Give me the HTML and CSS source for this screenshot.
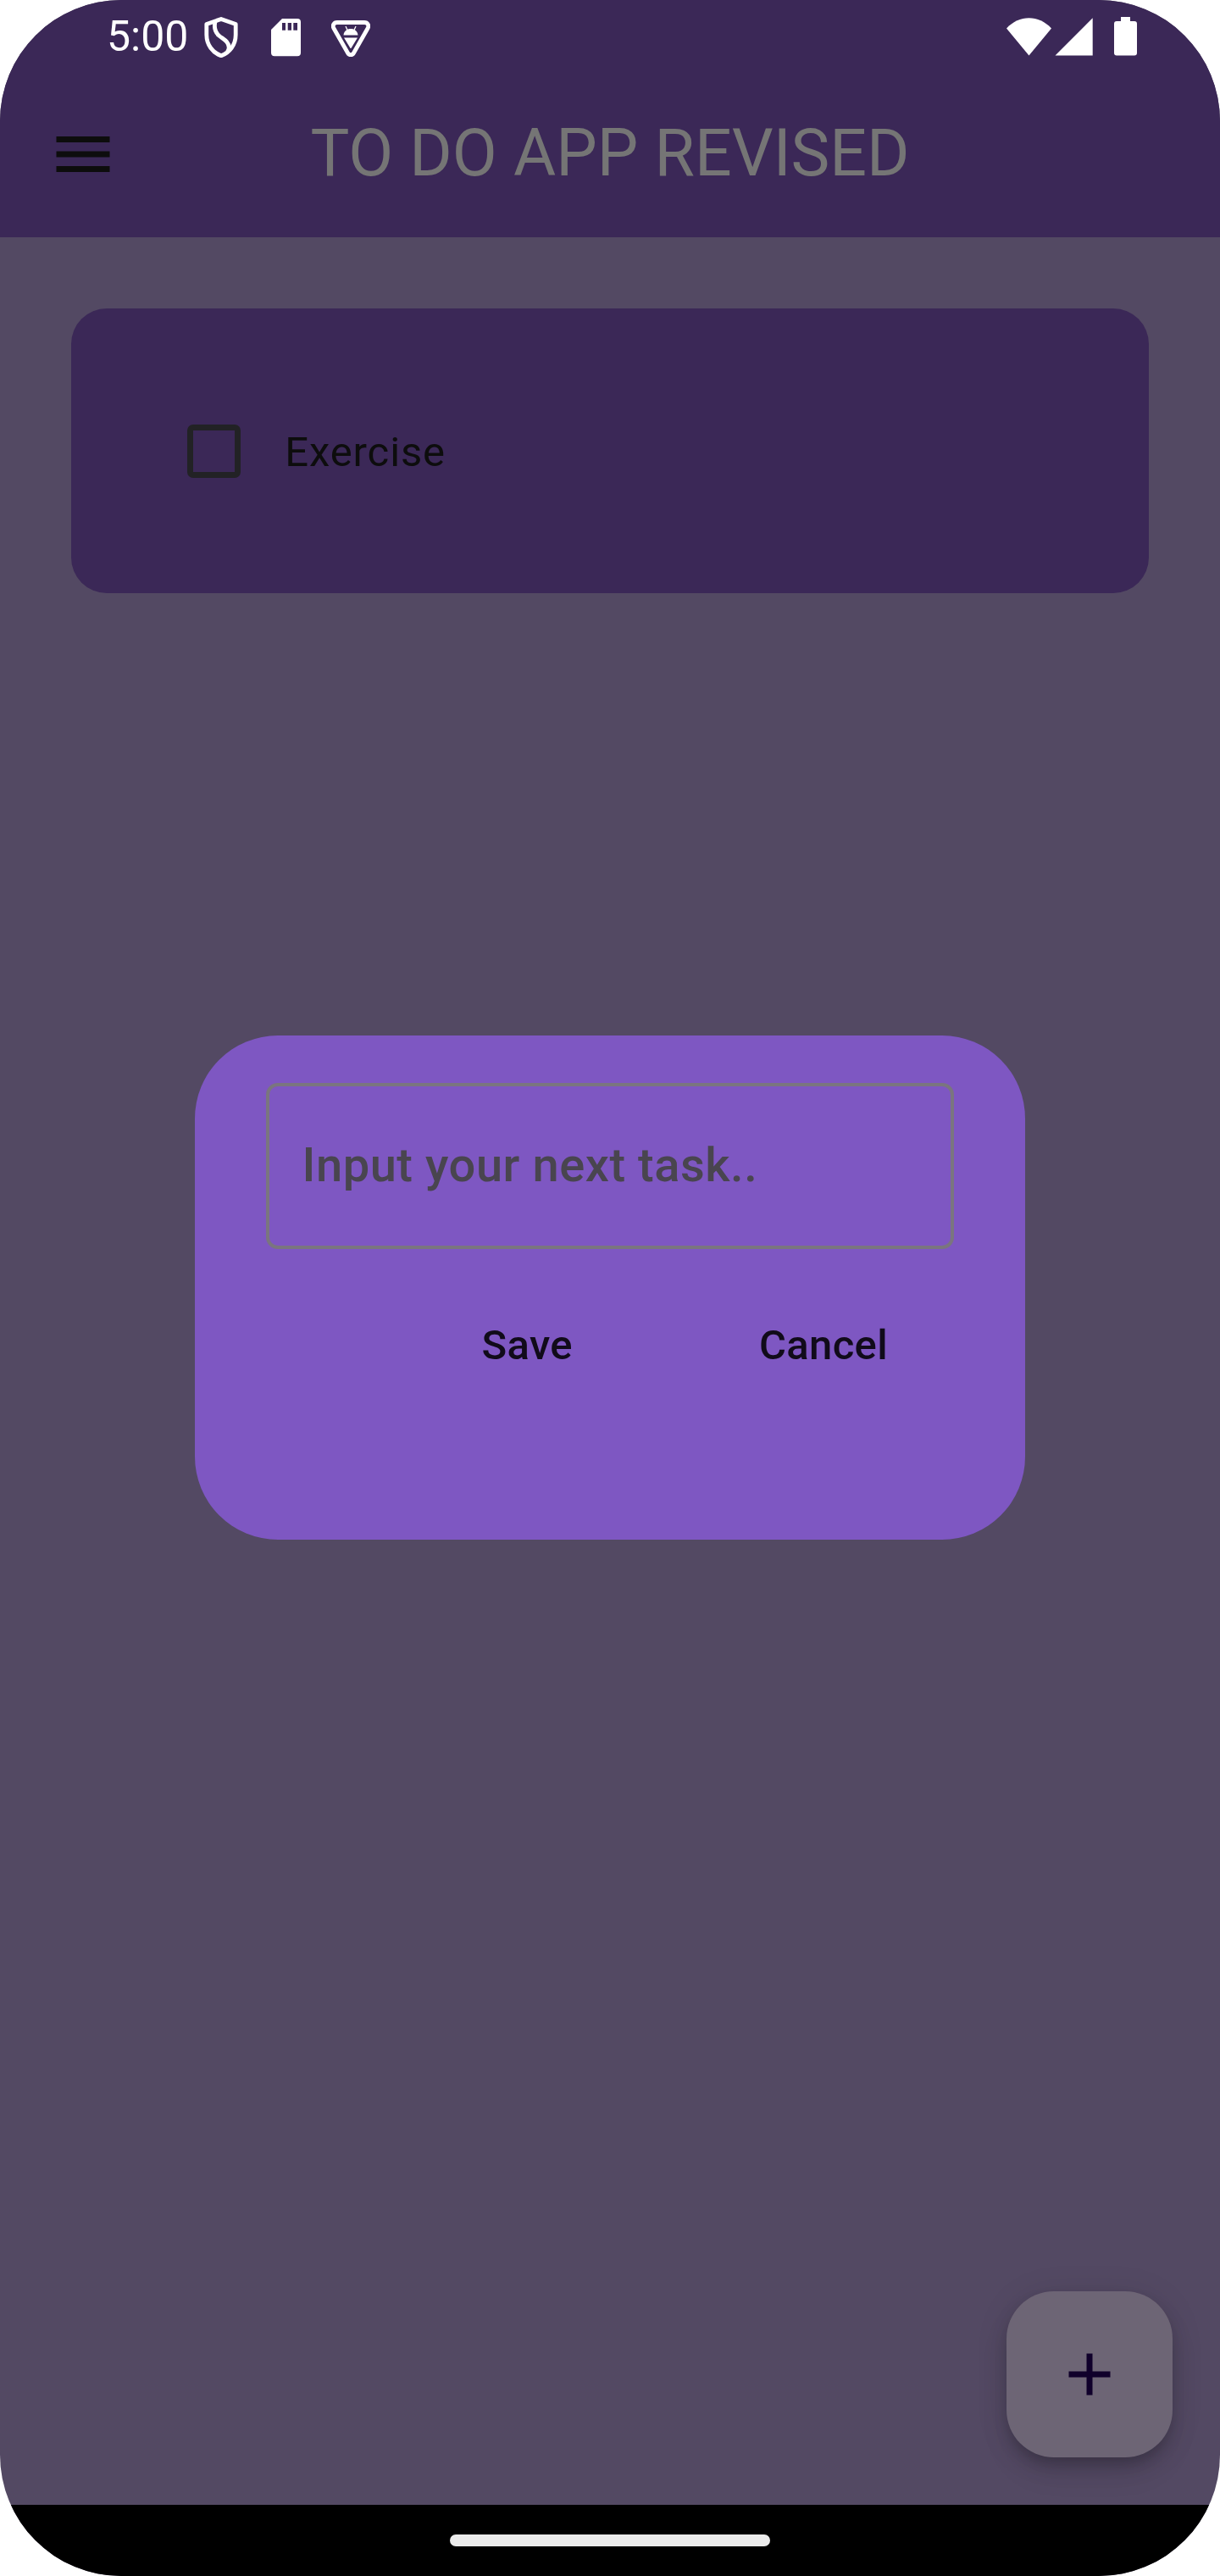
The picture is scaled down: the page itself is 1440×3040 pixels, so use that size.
FILE: index.html
```html
<!DOCTYPE html>
<html lang="en">
<head>
<meta charset="utf-8">
<title>To Do App Revised</title>
<link rel="stylesheet" href="styles.css">
</head>
<body>
<div class="screen">
  <header class="top">
    <div class="status">
      <div class="status-left">
        <span class="clock">5:00</span>
        <svg class="i-shield" viewBox="0 0 40 48" width="40" height="48" fill="none" stroke="#fff" stroke-width="4.8" stroke-linejoin="round">
          <path d="M20 2.4 L37.2 8.6 V21 C37.2 33 30 42 20 45.8 C10 42 2.8 33 2.8 21 V8.6 Z"/>
          <path d="M13 5.5 C11.5 12 12.5 18 18 22.500 C23 26.500 29 29 29.200 36 C29.200 38 28.500 39.500 27.500 41"/>
        </svg>
        <svg class="i-sd" viewBox="0 0 35 44.500" width="35" height="44.500" fill="#fff">
          <path fill-rule="evenodd" d="M13 0 H31 Q35 0 35 4 V40.300 Q35 44.300 31 44.300 H4 Q0 44.300 0 40.300 V13 Z M13 5 V13.700 H17 V5 Z M19.700 5 V13.700 H24 V5 Z M26.300 5 V13.700 H31 V5 Z"/>
        </svg>
        <svg class="i-debug" viewBox="0 0 46 43" width="46" height="43">
          <path d="M7 2.500 H39 C43 2.500 45 6 43 9.500 L26.500 38.500 C25 41.300 21 41.300 19.500 38.500 L3 9.500 C1 6 3 2.500 7 2.500 Z" fill="none" stroke="#fff" stroke-width="4.800"/>
          <path d="M14.500 17.500 C15 12.500 18.500 10 23 10 C27.500 10 31 12.500 31.500 17.500 Z M15 20.500 H31 L23.700 32.500 Q23 33.500 22.300 32.500 Z" fill="#fff"/>
          <path d="M19 11.500 L17 7 M27 11.500 L29 7" stroke="#fff" stroke-width="1.300"/>
        </svg>
      </div>
      <div class="status-right">
        <svg viewBox="0 0 53 45" width="53" height="45" fill="#fff"><path d="M0 12.500 C15 -3.800 38 -3.800 53 12.500 L26.500 44.500 Z"/></svg>
        <svg class="i-signal" viewBox="0 0 45 45" width="45" height="45" fill="#fff"><path d="M0.500 44.500 H44.700 V0.300 Z"/></svg>
        <svg class="i-battery" viewBox="0 0 27 46" width="27" height="46" fill="#fff"><path d="M8 0 H19 V5 H24 Q27 5 27 8 V42.600 Q27 45.600 24 45.600 H3 Q0 45.600 0 42.600 V8 Q0 5 3 5 H8 Z"/></svg>
      </div>
    </div>
    <div class="appbar">
      <svg class="menu" viewBox="0 0 24 24" width="84" height="84" fill="#0d0d0d"><path d="M3 18h18v-2H3v2zm0-5h18v-2H3v2zm0-7v2h18V6H3z"/></svg>
      <h1 class="title">TO DO APP REVISED</h1>
    </div>
  </header>
  <main class="content">
    <div class="task">
      <span class="checkbox"></span>
      <span class="task-name">Exercise</span>
    </div>
    <button class="fab" aria-label="Add task">
      <svg viewBox="0 0 24 24" width="84" height="84" fill="#10002b"><path d="M19 13h-6v6h-2v-6H5v-2h6V5h2v6h6v2z"/></svg>
    </button>
  </main>
  <footer class="nav"><span class="pill"></span></footer>
  <section class="dialog" role="dialog">
    <div class="field"><span class="hint">Input your next task..</span></div>
    <div class="actions">
      <button class="action save">Save</button>
      <button class="action cancel">Cancel</button>
    </div>
  </section>
</div>
</body>
</html>
```
FILE: styles.css
```css
* { box-sizing: border-box; }
body { margin: 0; background: #fff; font-family: Roboto, sans-serif; }
svg { display: block; flex: none; }
button { border: 0; padding: 0; background: none; font: inherit; }

.screen {
  position: relative;
  display: flex;
  flex-direction: column;
  width: 1440px;
  height: 3040px;
  border-radius: 143px;
  overflow: hidden;
  background: #534963;
}

.top { height: 280px; background: #3b2857; }
.status {
  display: flex;
  justify-content: space-between;
  height: 84px;
  padding: 20px 98px 0 126px;
}
.status-left, .status-right { display: flex; align-items: flex-start; }
.clock { width: 114.5px; color: #fff; font-size: 50px; line-height: 47px; }
.i-sd { margin: 2px 0 0 39.5px; }
.i-debug { margin: 3.500px 0 0 36px; }
.status-right svg:first-child { margin-top: 1px; }
.i-signal { margin: 1px 0 0 4px; }
.i-battery { margin-left: 25px; }

.appbar {
  display: grid;
  grid-template-columns: 84px 1fr 84px;
  align-items: center;
  height: 196px;
  padding: 0 56px;
}
.title {
  margin: 0;
  padding-bottom: 2px;
  color: #757575;
  font-size: 77px;
  font-weight: 400;
  line-height: 90px;
  text-align: center;
  white-space: nowrap;
}

.content {
  flex: 1;
  display: flex;
  flex-direction: column;
  justify-content: space-between;
  padding: 84px 84px 56px;
}
.task {
  display: flex;
  align-items: center;
  height: 336px;
  padding-left: 136.500px;
  border-radius: 42px;
  background: #3b2857;
}
.checkbox {
  width: 63px;
  height: 63px;
  border: 7px solid #222225;
  border-radius: 7px;
}
.task-name {
  margin-left: 52.800px;
  padding-top: 2px;
  color: #0d0d0d;
  font-size: 49px;
  letter-spacing: .875px;
}
.fab {
  display: flex;
  align-items: center;
  justify-content: center;
  align-self: flex-end;
  width: 196px;
  height: 196px;
  margin-right: -28px;
  border-radius: 56px;
  background: #6d6575;
  box-shadow: 0 11px 18px -4px rgba(0, 0, 0, .22), 0 20px 35px rgba(0, 0, 0, .07), 0 3px 40px rgba(0, 0, 0, .09);
}

.nav {
  display: flex;
  align-items: center;
  justify-content: center;
  height: 84px;
  background: #000;
}
.pill { width: 378px; height: 14px; border-radius: 7px; background: #ebebeb; }

.dialog {
  position: absolute;
  top: 1222px;
  left: 230px;
  width: 980px;
  height: 595px;
  padding: 56px 84px;
  border-radius: 98px;
  background: #7e57c2;
}
.field {
  display: flex;
  align-items: center;
  height: 196px;
  padding-left: 38.500px;
  border: 4px solid #7a757f;
  border-radius: 14px;
}
.hint {
  padding-bottom: 2px;
  color: #49454f;
  font-size: 56px;
  font-weight: 500;
  letter-spacing: .55px;
}
.actions {
  display: flex;
  justify-content: flex-end;
  gap: 220px;
  margin-top: 85px;
  padding-right: 78px;
}
.action {
  color: #110b1a;
  font-size: 49px;
  font-weight: 500;
  line-height: 58px;
  letter-spacing: .35px;
}
```
